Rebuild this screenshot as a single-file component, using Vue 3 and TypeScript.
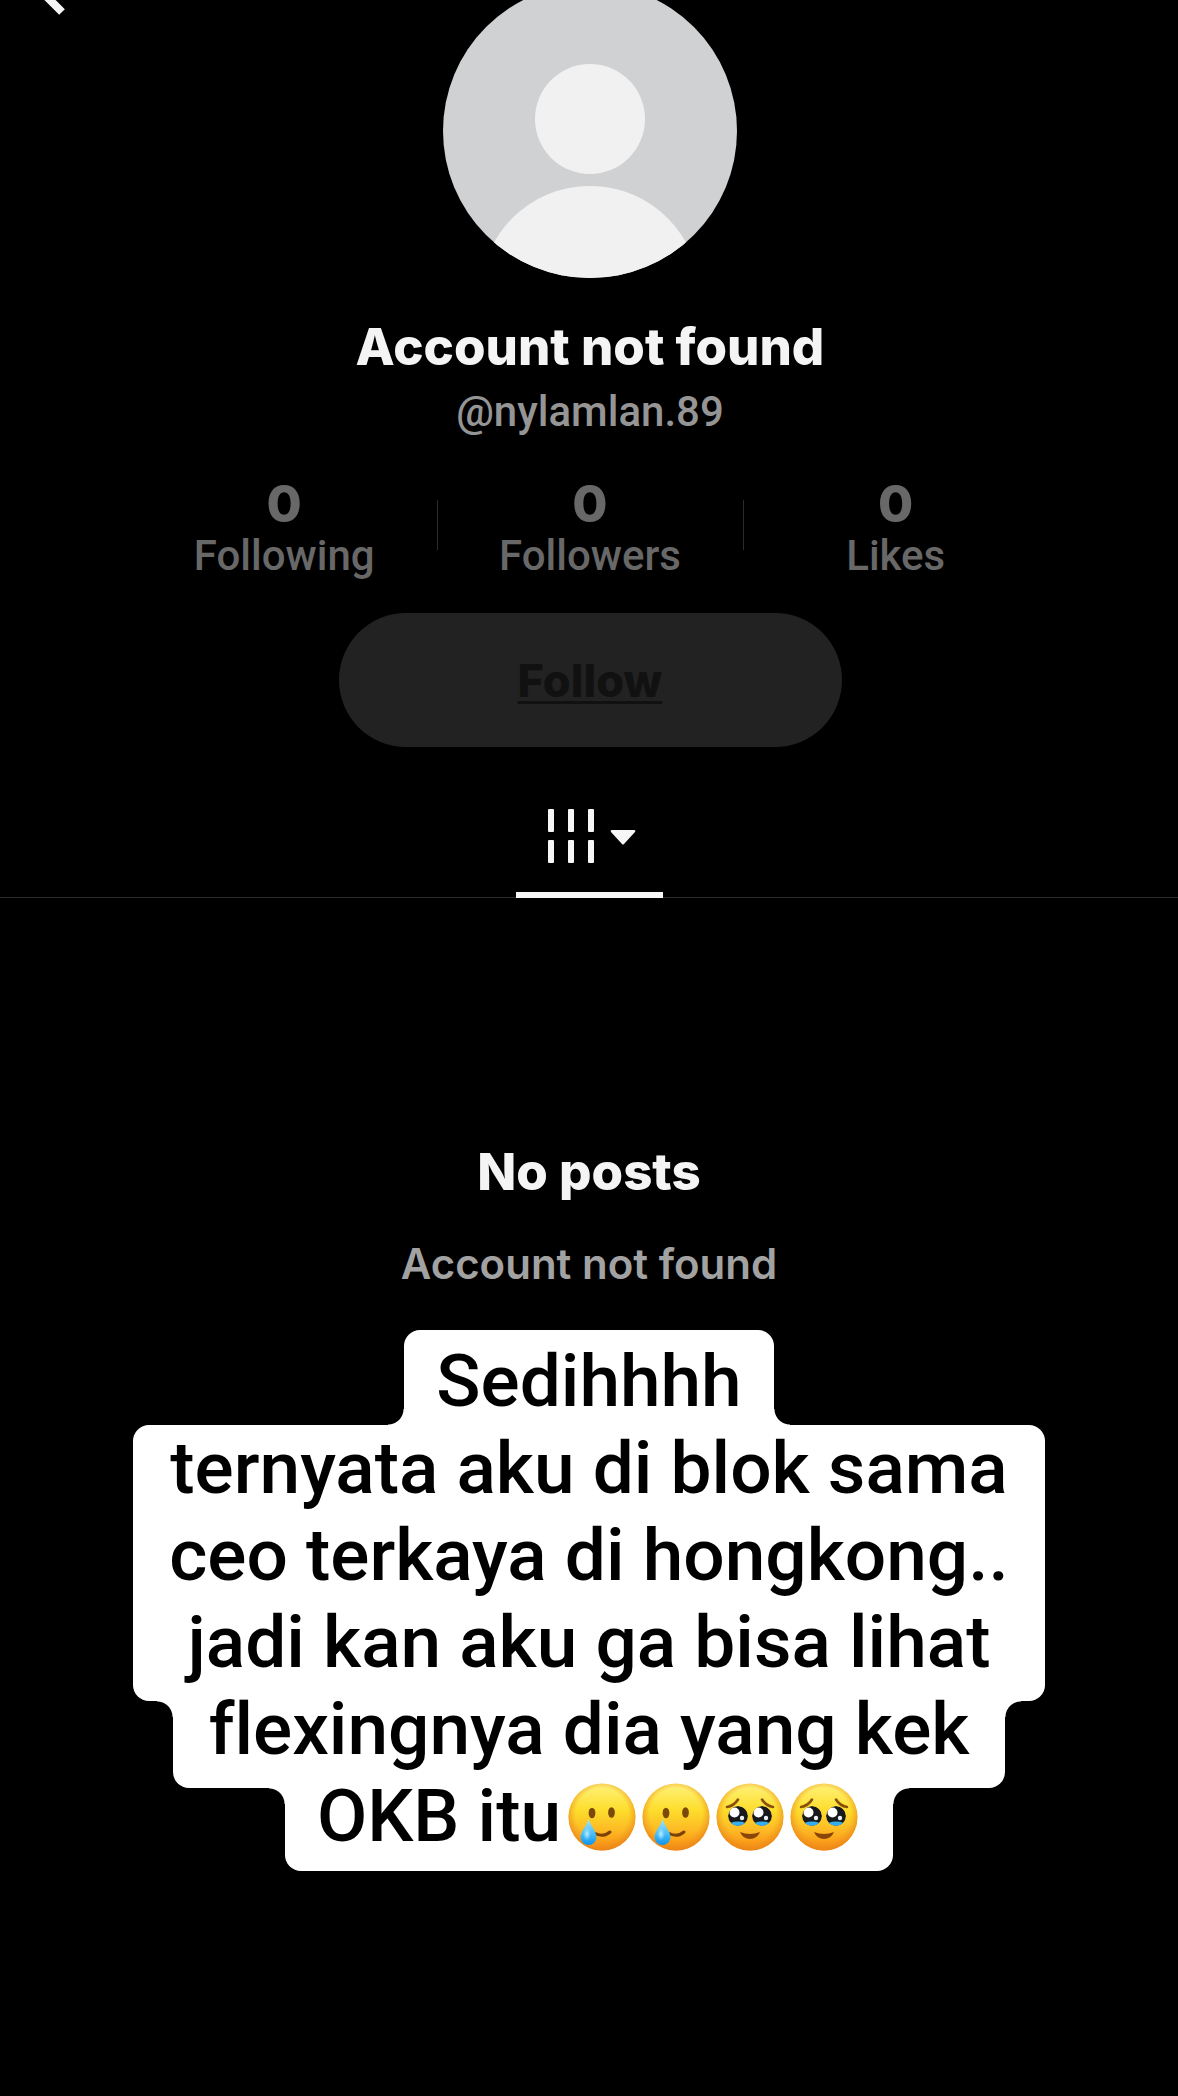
<script setup lang="ts">
interface Stat {
  value: number
  label: string
}

interface Segment {
  kind: 'first' | 'wide' | 'step' | 'last'
  lines: string[]
  emojis?: ('tear' | 'plead')[]
}

const stats: Stat[] = [
  { value: 0, label: 'Following' },
  { value: 0, label: 'Followers' },
  { value: 0, label: 'Likes' },
]

const segments: Segment[] = [
  { kind: 'first', lines: ['Sedihhhh'] },
  {
    kind: 'wide',
    lines: ['ternyata aku di blok sama', 'ceo terkaya di hongkong..', 'jadi kan aku ga bisa lihat'],
  },
  { kind: 'step', lines: ['flexingnya dia yang kek'] },
  { kind: 'last', lines: ['OKB itu'], emojis: ['tear', 'tear', 'plead', 'plead'] },
]
</script>

<template>
  <main class="page">
    <button class="back" type="button" aria-label="Back">
      <svg width="48" height="48" viewBox="0 0 48 48" aria-hidden="true">
        <path d="M37 4 L17 24 L37 44" fill="none" stroke="#f4f4f4" stroke-width="8" />
      </svg>
    </button>

    <header class="profile">
      <svg class="avatar" viewBox="0 0 294 294" role="img" aria-label="Default avatar">
        <defs>
          <clipPath id="avatar-clip"><circle cx="147" cy="147" r="147" /></clipPath>
        </defs>
        <g clip-path="url(#avatar-clip)">
          <rect width="294" height="294" fill="#d0d1d3" />
          <circle cx="147" cy="135" r="55" fill="#f1f1f2" />
          <circle cx="147" cy="312" r="110" fill="#f1f1f2" />
        </g>
      </svg>
      <h1 class="title">Account not found</h1>
      <p class="handle">@nylamlan.89</p>

      <ul class="stats">
        <li v-for="stat in stats" :key="stat.label" class="stat">
          <strong class="value">{{ stat.value }}</strong>
          <span class="label">{{ stat.label }}</span>
        </li>
      </ul>

      <button class="follow" type="button"><span class="follow-text">Follow</span></button>
    </header>

    <nav class="tabs">
      <button class="tab" type="button" aria-label="Posts">
        <svg width="88" height="56" viewBox="0 0 88 56" aria-hidden="true" fill="#f6f6f6">
          <rect x="0" y="1" width="6" height="23" rx="1" />
          <rect x="20" y="1" width="6" height="23" rx="1" />
          <rect x="40" y="1" width="6" height="23" rx="1" />
          <rect x="0" y="32" width="6" height="23" rx="1" />
          <rect x="20" y="32" width="6" height="23" rx="1" />
          <rect x="40" y="32" width="6" height="23" rx="1" />
          <path d="M64 22 H86 Q88 22 87 24 L76 36 Q75 37 74 36 L63 24 Q62 22 64 22 Z" />
        </svg>
      </button>
    </nav>

    <section class="empty">
      <h2 class="title">No posts</h2>
      <p class="note">Account not found</p>
    </section>

    <section class="caption">
      <svg class="defs" width="0" height="0" aria-hidden="true">
        <defs>
          <linearGradient id="face" x1="0" y1="0" x2="0" y2="1">
            <stop offset="0" stop-color="#fff27a" />
            <stop offset="0.4" stop-color="#fddd2c" />
            <stop offset="0.7" stop-color="#fdb924" />
            <stop offset="1" stop-color="#fa8a10" />
          </linearGradient>
          <radialGradient id="rim" cx="0.5" cy="0.46" r="0.54">
            <stop offset="0.72" stop-color="#f09a20" stop-opacity="0" />
            <stop offset="1" stop-color="#e9841a" stop-opacity="0.85" />
          </radialGradient>
          <linearGradient id="drop" x1="0" y1="0" x2="0" y2="1">
            <stop offset="0" stop-color="#a8e4fb" />
            <stop offset="0.55" stop-color="#4cc0f8" />
            <stop offset="1" stop-color="#0d93ee" />
          </linearGradient>
          <radialGradient id="shine" cx="0.5" cy="0.5" r="0.5">
            <stop offset="0" stop-color="#d8f6ff" stop-opacity="0.9" />
            <stop offset="1" stop-color="#8fdcff" stop-opacity="0" />
          </radialGradient>
          <clipPath id="eye-left"><circle cx="25" cy="36" r="10" /></clipPath>
          <clipPath id="eye-right"><circle cx="49" cy="36" r="10" /></clipPath>
        </defs>
      </svg>

      <div v-for="segment in segments" :key="segment.kind" class="segment" :class="segment.kind">
        <p v-for="line in segment.lines" :key="line" class="line">
          <span>{{ line }}</span>
          <span v-if="segment.emojis" class="emojis">
            <template v-for="(emoji, i) in segment.emojis" :key="i">
              <svg v-if="emoji === 'tear'" class="emoji" viewBox="0 0 74 74" role="img" aria-label="Smiling face with tear">
                <circle cx="37" cy="37" r="33.5" fill="url(#face)" />
                <circle cx="37" cy="37" r="33.5" fill="url(#rim)" />
                <ellipse cx="27" cy="33" rx="3.4" ry="5.2" fill="#7b4a0a" />
                <ellipse cx="46.5" cy="32.5" rx="3.4" ry="5.2" fill="#7b4a0a" />
                <path d="M29 53 Q38 58 45 52" fill="none" stroke="#7b4208" stroke-width="3" stroke-linecap="round" />
                <path d="M23.5 39 C26 47 31.5 51 31.5 57.5 A8 7.5 0 0 1 15.5 57.5 C15.5 51 21.5 47 23.5 39 Z" fill="url(#drop)" />
                <ellipse cx="22" cy="54" rx="4" ry="7" fill="url(#shine)" />
              </svg>
              <svg v-else class="emoji" viewBox="0 0 74 74" role="img" aria-label="Face holding back tears">
                <circle cx="37" cy="37" r="33.5" fill="url(#face)" />
                <circle cx="37" cy="37" r="33.5" fill="url(#rim)" />
                <path d="M14 27 Q21 26 25 19.5 M60 27 Q53 26 49 19.5" fill="none" stroke="#8a5009" stroke-width="2.6" stroke-linecap="round" />
                <g clip-path="url(#eye-left)">
                  <circle cx="25" cy="36" r="10" fill="#17191d" />
                  <ellipse cx="25" cy="46" rx="10" ry="4.5" fill="#35aef0" />
                  <circle cx="21.5" cy="32.5" r="5" fill="#fff" />
                  <circle cx="29" cy="38" r="2.2" fill="#e8f1f6" />
                </g>
                <g clip-path="url(#eye-right)">
                  <circle cx="49" cy="36" r="10" fill="#17191d" />
                  <ellipse cx="49" cy="46" rx="10" ry="4.5" fill="#35aef0" />
                  <circle cx="45.5" cy="32.5" r="5" fill="#fff" />
                  <circle cx="53" cy="38" r="2.2" fill="#e8f1f6" />
                </g>
                <path d="M27 52 Q37 56 47 52 Q44 59 37 59 Q30 59 27 52 Z" fill="#8a4508" />
              </svg>
            </template>
          </span>
        </p>
      </div>
    </section>
  </main>
</template>

<style>
body {
  margin: 0;
  background: #000;
}
</style>

<style scoped>
.page {
  position: relative;
  min-height: 100vh;
  overflow: hidden;
  background: #000;
  color: #f4f4f4;
  font-family: Inter, "Liberation Sans", sans-serif;
  font-weight: 500;
  text-align: center;
}

h1,
h2,
p,
ul {
  margin: 0;
  padding: 0;
}

button {
  border: 0;
  padding: 0;
  background: none;
  color: inherit;
  font: inherit;
}

.back {
  position: absolute;
  top: -32px;
  left: 25px;
}

.back svg,
.tab svg {
  display: block;
}

.profile {
  display: flex;
  flex-direction: column;
  align-items: center;
  padding-left: 2px;
}

.avatar {
  width: 294px;
  height: 294px;
  margin-top: -16px;
}

.title {
  font-size: 51px;
  line-height: 60px;
  font-weight: 800;
}

.profile .title {
  margin-top: 39px;
}

.handle {
  margin-top: 10px;
  font-family: Roboto, sans-serif;
  font-size: 42px;
  line-height: 50px;
  color: #959595;
}

.stats {
  display: flex;
  width: 78%;
  margin-top: 41px;
  list-style: none;
  color: #686868;
}

.stat {
  position: relative;
  display: flex;
  flex: 1;
  flex-direction: column;
}

.stat + .stat::before {
  content: "";
  position: absolute;
  top: 22px;
  left: 0;
  width: 1px;
  height: 50px;
  background: #2c2c2c;
}

.value {
  font-size: 51px;
  line-height: 52px;
  font-weight: 800;
}

.label {
  font-family: Roboto, sans-serif;
  font-size: 42px;
  line-height: 52px;
}

.follow {
  width: 503px;
  max-width: 90%;
  height: 134px;
  margin-top: 31px;
  border-radius: 67px;
  background: #222;
  color: #111;
  font-size: 45px;
  font-weight: 800;
}

.follow-text {
  text-decoration: underline;
  text-decoration-thickness: 3px;
  text-underline-offset: 4px;
  text-decoration-skip-ink: none;
}

.tabs {
  display: flex;
  justify-content: center;
  margin-top: 61px;
  box-shadow: inset 0 -1px #2a2a2a;
}

.tab {
  width: 147px;
  padding: 0 0 28px 32px;
  border-bottom: 6px solid #f6f6f6;
}

.empty {
  padding-top: 244px;
}

.note {
  margin-top: 36px;
  font-size: 42px;
  line-height: 52px;
  font-weight: 600;
  color: #a2a2a2;
}

.caption {
  --radius: 16px;
  display: flex;
  flex-direction: column;
  align-items: center;
  margin-top: 40px;
  padding-bottom: 120px;
  color: #000;
  font-family: Roboto, "Liberation Sans", sans-serif;
  font-variant-ligatures: none;
}

.defs {
  position: absolute;
}

.segment {
  position: relative;
  padding: 0 36px 15px;
  margin-bottom: -15px;
  border-radius: var(--radius);
  background: #fff;
}

.segment.first {
  padding: 8px 32px 0;
  margin-bottom: 0;
  border-radius: var(--radius) var(--radius) 0 0;
}

.segment.step,
.segment.last {
  border-radius: 0 0 var(--radius) var(--radius);
}

.segment.last {
  padding: 0 32px 11px;
}

/* Inner corners where a narrow segment meets a wider one */
.segment:not(.wide)::before,
.segment:not(.wide)::after {
  content: "";
  position: absolute;
  top: 15px;
  width: var(--radius);
  height: var(--radius);
}

.segment::before {
  right: 100%;
  background: radial-gradient(circle at 0 100%, transparent 15px, #fff 16px);
}

.segment::after {
  left: 100%;
  background: radial-gradient(circle at 100% 100%, transparent 15px, #fff 16px);
}

.segment.first::before,
.segment.first::after {
  top: auto;
  bottom: 0;
}

.segment.first::before {
  background: radial-gradient(circle at 0 0, transparent 15px, #fff 16px);
}

.segment.first::after {
  background: radial-gradient(circle at 100% 0, transparent 15px, #fff 16px);
}

.line {
  display: flex;
  justify-content: center;
  align-items: center;
  gap: 4px;
  font-size: 73px;
  line-height: 87px;
  white-space: nowrap;
}

.emojis {
  display: flex;
}

.emoji {
  width: 74px;
  height: 74px;
}
</style>
